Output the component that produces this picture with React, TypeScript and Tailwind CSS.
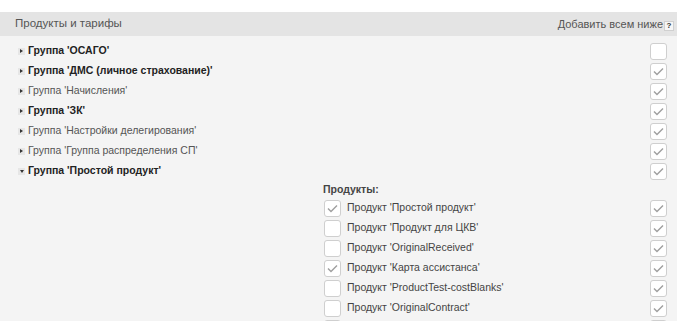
import React from "react";

const groups: { name: string; bold: boolean; checked: boolean; open?: boolean }[] = [
  { name: "Группа 'ОСАГО'", bold: true, checked: false },
  { name: "Группа 'ДМС (личное страхование)'", bold: true, checked: true },
  { name: "Группа 'Начисления'", bold: false, checked: true },
  { name: "Группа 'ЗК'", bold: true, checked: true },
  { name: "Группа 'Настройки делегирования'", bold: false, checked: true },
  { name: "Группа 'Группа распределения СП'", bold: false, checked: true },
  { name: "Группа 'Простой продукт'", bold: true, checked: true, open: true },
];

const products: { name: string; checked: boolean }[] = [
  { name: "Продукт 'Простой продукт'", checked: true },
  { name: "Продукт 'Продукт для ЦКВ'", checked: false },
  { name: "Продукт 'OriginalReceived'", checked: false },
  { name: "Продукт 'Карта ассистанса'", checked: true },
  { name: "Продукт 'ProductTest-costBlanks'", checked: false },
  { name: "Продукт 'OriginalContract'", checked: false },
];

function Box({ checked }: { checked: boolean }) {
  return (
    <span className="flex h-[17px] w-[17px] shrink-0 items-center justify-center rounded-[3px] border border-[#cfcfcf] bg-white">
      {checked && (
        <svg width="11" height="9" viewBox="0 0 11 9">
          <path d="M1 4.5 L4 7.5 L10 1.5" fill="none" stroke="#a0a0a0" strokeWidth="1.5" />
        </svg>
      )}
    </span>
  );
}

function Arrow({ open }: { open?: boolean }) {
  return (
    <span className="mr-[3px] flex h-[7px] w-[7px] items-center justify-center bg-[#e6e6e6]">
      {open ? (
        <span className="h-0 w-0 border-x-[2.5px] border-t-[3px] border-x-transparent border-t-[#333]" />
      ) : (
        <span className="h-0 w-0 border-y-[2.5px] border-l-[3px] border-y-transparent border-l-[#333]" />
      )}
    </span>
  );
}

export default function App() {
  return (
    <div
      className="h-[321px] w-[679px] overflow-hidden bg-white pt-[12px]"
      style={{ fontFamily: '"Liberation Sans", Arial, sans-serif' }}
    >
      <div className="flex h-[24px] w-[677px] items-center justify-between bg-[#e4e4e4] pl-[15px] pr-[3px] text-[#555]">
        <span className="text-[11.5px]">Продукты и тарифы</span>
        <span className="flex items-center text-[11px]">
          Добавить всем ниже
          <span className="ml-[1px] mt-[3px] flex h-[10px] w-[10px] items-center justify-center border border-[#d0d0d0] bg-[#f6f6f6] text-[8px] font-bold leading-none text-[#333]">
            ?
          </span>
        </span>
      </div>
      <div className="h-full w-[677px] bg-[#f4f4f4] pt-[5px]">
        {groups.map((g) => (
          <div key={g.name} className="flex h-[20px] items-center justify-between pl-[18px] pr-[10px]">
            <span
              className={
                "flex items-center text-[10.5px] " + (g.bold ? "font-bold text-[#222]" : "text-[#555]")
              }
            >
              <Arrow open={g.open} />
              {g.name}
            </span>
            <Box checked={g.checked} />
          </div>
        ))}
        <div className="flex h-[17px] items-center pl-[323px] text-[10.5px] font-bold text-[#444]">Продукты:</div>
        {products.map((p) => (
          <div key={p.name} className="flex h-[20px] items-center justify-between pl-[324px] pr-[10px]">
            <span className="flex items-center text-[10.5px] text-[#444]">
              <Box checked={p.checked} />
              <span className="ml-[6px]">{p.name}</span>
            </span>
            <Box checked={true} />
          </div>
        ))}
        <div className="flex h-[20px] items-center justify-between pl-[324px] pr-[10px]">
          <Box checked={false} />
          <Box checked={true} />
        </div>
      </div>
    </div>
  );
}
